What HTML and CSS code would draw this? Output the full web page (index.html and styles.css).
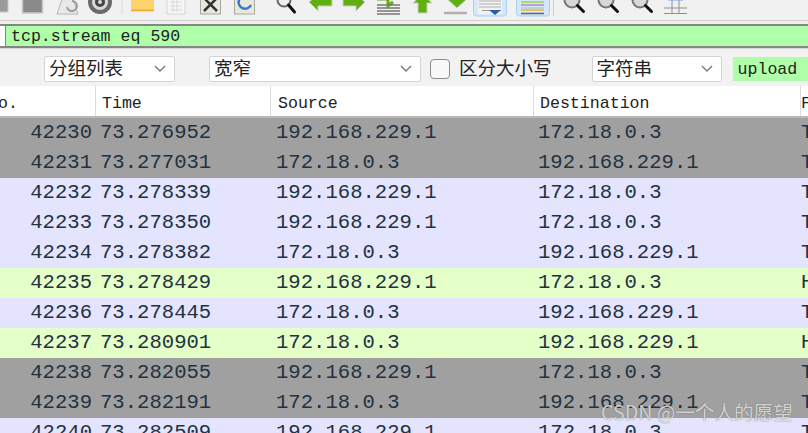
FILE: index.html
```html
<!DOCTYPE html>
<html lang="zh">
<head>
<meta charset="utf-8">
<title>Wireshark</title>
<link rel="stylesheet" href="styles.css">
</head>
<body>
<div class="toolbar">
  <svg class="tb-icons" width="808" height="20" viewBox="0 0 808 20">
    <rect x="-4" y="-6" width="12" height="18" fill="#9a9a9a" stroke="#c8c8c8"/>
    <rect x="22.500" y="-6" width="20" height="19" fill="#8a8a8a" stroke="#c8c8c8" stroke-width="1.500"/>
    <path d="M57 14l6-18h9l6 18z" fill="#e8e8e8" stroke="#b8b8b8"/>
    <path d="M72 1a5 5 0 1 1-5 6" fill="none" stroke="#9a9a9a" stroke-width="2"/>
    <circle cx="100" cy="2" r="12" fill="#6a6a6a"/><circle cx="100" cy="2" r="8" fill="#d8d8d8"/><circle cx="100" cy="2" r="5" fill="#444"/><circle cx="100" cy="2" r="2" fill="#ddd"/>
    <path d="M122 -4v18" stroke="#d8d8d8"/>
    <rect x="131" y="-4" width="23" height="15" fill="#fdd36c"/><path d="M131 10.500h23" stroke="#eda52c" stroke-width="1.500"/>
    <rect x="167" y="-4" width="18" height="18" fill="#f6f6f6" stroke="#d4d4d4"/><path d="M170 2h12M170 6h12M170 10h12M173 -2v14M177 -2v14" stroke="#d8d8d8"/>
    <rect x="200.500" y="-4" width="20" height="18" fill="#e8e8dc" stroke="#a8a8a0"/><path d="M204 -2l13 13M217 -2l-13 13" stroke="#333" stroke-width="2.500"/>
    <rect x="234.500" y="-4" width="20" height="18" fill="#e8e8dc" stroke="#a8a8a0"/><path d="M251 5a6.500 6.500 0 1 1-2-8" fill="none" stroke="#3878c8" stroke-width="2.500"/>
    <circle cx="284" cy="0" r="6.500" fill="#eee" stroke="#666" stroke-width="2"/><path d="M288.500 5l6 7" stroke="#111" stroke-width="3" stroke-linecap="round"/>
    <path d="M309 2l9-7v4h14v7h-14v5z" fill="#5fb010" stroke="#c8d0c0"/>
    <path d="M365 2l-9-7v4h-13v7h13v5z" fill="#5fb010" stroke="#c8d0c0"/>
    <path d="M377 -1h11v7l5-4" fill="none" stroke="#5fb010" stroke-width="3"/>
    <path d="M377 5h23M377 8h23M377 11h23M377 14h23" stroke="#777" stroke-width="1.400"/>
    <path d="M413 3l9.500-9 9.500 9h-5v10h-9v-10z" fill="#5fb010" stroke="#c8d0c0"/>
    <path d="M447 -1h5v-4h10v4h5l-10 9z" fill="#5fb010" stroke="#c8d0c0"/><path d="M444 13h23" stroke="#b0b0b0" stroke-width="2.500"/>
    <rect x="473.500" y="-4" width="33" height="20" rx="3" fill="#d4e8fb" stroke="#a8d0f4"/><rect x="478" y="-4" width="24" height="18" fill="#f2f2f2"/><path d="M479 1h22M479 4h22M479 7h22" stroke="#b0b0b0"/><path d="M482 10.500h19" stroke="#999"/><path d="M489 10h12l-6 5z" fill="#2a5ca8"/>
    <rect x="516.500" y="-4" width="33" height="20" rx="3" fill="#d4e8fb" stroke="#a8d0f4"/><path d="M521 2h23" stroke="#b4d47c" stroke-width="2"/><path d="M521 5h23" stroke="#b0a8d0" stroke-width="2"/><path d="M521 8h23" stroke="#c8b0a8" stroke-width="1"/><path d="M521 10h23" stroke="#e0c868" stroke-width="2"/><path d="M521 13.500h23" stroke="#666" stroke-width="1.500"/>
    <path d="M553.500 -4v20" stroke="#d0d0d0"/>
    <circle cx="572" cy="0" r="7.500" fill="#d8d8d8" stroke="#777" stroke-width="2"/><path d="M577.500 5.500l6 6" stroke="#111" stroke-width="3" stroke-linecap="round"/>
    <circle cx="606" cy="0" r="7.500" fill="#d8d8d8" stroke="#777" stroke-width="2"/><path d="M611.500 5.500l6 6" stroke="#111" stroke-width="3" stroke-linecap="round"/>
    <circle cx="640" cy="0" r="7.500" fill="#d8d8d8" stroke="#777" stroke-width="2"/><path d="M645.500 5.500l6 6" stroke="#111" stroke-width="3" stroke-linecap="round"/>
    <rect x="665" y="-4" width="21" height="17" fill="#f0f0f0"/><path d="M664 8h23M664 13.500h23M672 -4v18M679 -4v18" stroke="#909090"/><path d="M668 -1h15" stroke="#70a8e0" stroke-width="3"/>
  </svg>
</div>
<div class="filter-bar">
  <div class="filter-label"></div>
  <div class="filter-input">tcp.stream eq 590</div>
</div>
<div class="find-bar">
  <div class="select select-a"><span>分组列表</span><svg class="chev" width="12" height="7" viewBox="0 0 12 7"><path d="M1 1l5 5 5-5"/></svg></div>
  <div class="select select-b"><span>宽窄</span><svg class="chev" width="12" height="7" viewBox="0 0 12 7"><path d="M1 1l5 5 5-5"/></svg></div>
  <div class="checkbox"></div>
  <span class="check-label">区分大小写</span>
  <div class="select select-c"><span>字符串</span><svg class="chev" width="12" height="7" viewBox="0 0 12 7"><path d="M1 1l5 5 5-5"/></svg></div>
  <div class="find-input">upload</div>
</div>
<div class="packets">
  <div class="row head"><div class="no">o.</div><div class="time">Time</div><div class="src">Source</div><div class="dst">Destination</div><div class="proto">F</div></div>
  <div class="row gray"><div class="no">42230</div><div class="time">73.276952</div><div class="src">192.168.229.1</div><div class="dst">172.18.0.3</div><div class="proto">T</div></div>
  <div class="row gray"><div class="no">42231</div><div class="time">73.277031</div><div class="src">172.18.0.3</div><div class="dst">192.168.229.1</div><div class="proto">T</div></div>
  <div class="row lav"><div class="no">42232</div><div class="time">73.278339</div><div class="src">192.168.229.1</div><div class="dst">172.18.0.3</div><div class="proto">T</div></div>
  <div class="row lav"><div class="no">42233</div><div class="time">73.278350</div><div class="src">192.168.229.1</div><div class="dst">172.18.0.3</div><div class="proto">T</div></div>
  <div class="row lav"><div class="no">42234</div><div class="time">73.278382</div><div class="src">172.18.0.3</div><div class="dst">192.168.229.1</div><div class="proto">T</div></div>
  <div class="row lime"><div class="no">42235</div><div class="time">73.278429</div><div class="src">192.168.229.1</div><div class="dst">172.18.0.3</div><div class="proto">H</div></div>
  <div class="row lav"><div class="no">42236</div><div class="time">73.278445</div><div class="src">172.18.0.3</div><div class="dst">192.168.229.1</div><div class="proto">T</div></div>
  <div class="row lime"><div class="no">42237</div><div class="time">73.280901</div><div class="src">172.18.0.3</div><div class="dst">192.168.229.1</div><div class="proto">H</div></div>
  <div class="row gray"><div class="no">42238</div><div class="time">73.282055</div><div class="src">192.168.229.1</div><div class="dst">172.18.0.3</div><div class="proto">T</div></div>
  <div class="row gray"><div class="no">42239</div><div class="time">73.282191</div><div class="src">172.18.0.3</div><div class="dst">192.168.229.1</div><div class="proto">T</div></div>
  <div class="row lav"><div class="no">42240</div><div class="time">73.282509</div><div class="src">192.168.229.1</div><div class="dst">172.18.0.3</div><div class="proto">T</div></div>
</div>
<div class="watermark">CSDN @一个人的愿望</div>
</body>
</html>
```
FILE: styles.css
```css
* { box-sizing: border-box; }
html, body { margin: 0; padding: 0; }
body {
  width: 808px;
  height: 433px;
  overflow: hidden;
  background: #f0f0f0;
  position: relative;
  font-family: "Liberation Mono", monospace;
  color: #222;
}
.toolbar { height: 21px; border-bottom: 1px solid #d0d0d0; overflow: hidden; background: #f1f1f1; }
.tb-icons { display: block; filter: blur(0.4px); }
.filter-bar {
  height: 24px;
  margin-top: 3px;
  display: flex;
  border-top: 2px solid #858585;
  border-bottom: 2px solid #858585;
  background: #fff;
}
.filter-label { width: 6px; border-right: 1px solid #858585; }
.filter-input {
  flex: 1;
  background: #afffa9;
  padding-left: 5px;
  font-size: 16.6px;
  line-height: 22px;
  overflow: hidden;
  color: #222;
}
.find-bar {
  height: 38px;
  display: flex;
  align-items: center;
  padding: 2px 0 0 44px;
  background: #f2f2f2;
  border-top: 1px solid #d8d8d8;
}
.select {
  height: 26px;
  background: #fff;
  border: 1px solid #d4d4d8;
  border-radius: 2px;
  display: flex;
  flex: none;
  align-items: center;
  justify-content: space-between;
  padding: 0 8px 0 4px;
  font-family: "Noto Sans CJK SC", sans-serif;
  font-size: 18.500px;
  line-height: 24px;
  color: #222;
}
.select span { margin-bottom: 4px; }
.select-a { width: 131px; }
.select-b { width: 212px; margin-left: 34px; }
.select-c { width: 130px; margin-left: 40px; }
.chev { fill: none; stroke: #777; stroke-width: 1.4; }
.checkbox {
  width: 20px;
  height: 20px;
  flex: none;
  margin-left: 9px;
  border: 1.5px solid #8c8c8c;
  border-radius: 4px;
  background: #f8f8f8;
}
.check-label {
  margin: 0 0 4px 9px;
  font-family: "Noto Sans CJK SC", sans-serif;
  font-size: 18.500px;
  color: #222;
  flex: none;
}
.find-input {
  width: 75px;
  height: 24px;
  margin-left: 11px;
  background: #afffa9;
  padding-left: 5px;
  font-size: 16.6px;
  line-height: 26px;
  flex: none;
}
.packets { display: flex; flex-direction: column; background: #fff; }
.row { display: grid; grid-template-columns: 96px 175px 263px 267px 7px; height: 30px; font-size: 20.6px; line-height: 29px; color: #233240; white-space: nowrap; }
.row > div { overflow: hidden; }
.row .no { text-align: right; padding-right: 4px; }
.row .time { padding-left: 4px; }
.row .src { padding-left: 5px; }
.row .dst { padding-left: 4px; }
.row .proto { padding-left: 0; }
.row.head {
  height: 32px;
  font-size: 16.6px;
  line-height: 35px;
  color: #222;
  background: #fff;
  border-bottom: 2px solid #b8b8b8;
}
.row.head > div { border-right: 1px solid #dcdcdc; }
.row.head .no { text-align: left; padding: 0; text-indent: -2px; }
.row.head .time { padding-left: 6px; }
.row.head .src { padding-left: 7px; }
.row.head .dst { padding-left: 6px; }
.row.head .proto { border-right: 0; }
.gray { background: #a0a0a0; }
.lav { background: #e4e4ff; }
.lime { background: #e4ffc7; }
.watermark {
  position: absolute;
  left: 601px;
  top: 400px;
  font-family: "Noto Sans CJK SC", "Liberation Sans", sans-serif;
  font-size: 19.6px;
  line-height: 24px;
  color: rgba(255,255,255,.72);
  text-shadow: 0 0 1px rgba(60,60,60,.7);
}
```
